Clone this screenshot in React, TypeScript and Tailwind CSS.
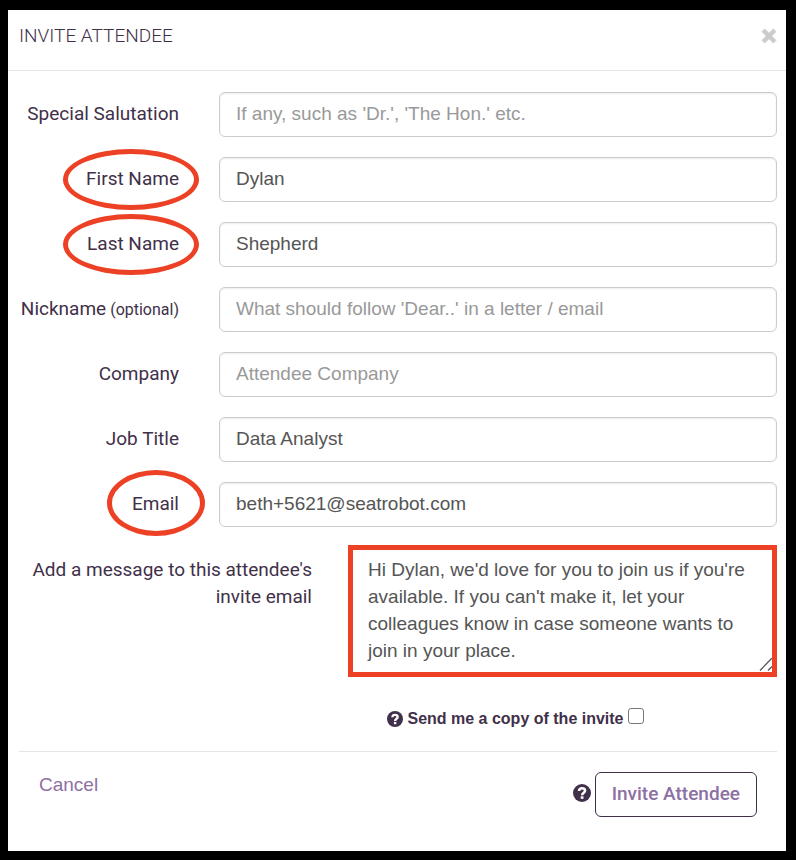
import { useState } from "react";

type Field = {
    id: string;
    label: string;
    hint?: string;
    type?: string;
    placeholder?: string;
    value?: string;
    mark?: "wide" | "narrow";
};

const fields: Field[] = [
    {
        id: "salutation",
        label: "Special Salutation",
        placeholder: "If any, such as 'Dr.', 'The Hon.' etc.",
    },
    { id: "firstName", label: "First Name", value: "Dylan", mark: "wide" },
    { id: "lastName", label: "Last Name", value: "Shepherd", mark: "wide" },
    {
        id: "nickname",
        label: "Nickname",
        hint: "(optional)",
        placeholder: "What should follow 'Dear..' in a letter / email",
    },
    { id: "company", label: "Company", placeholder: "Attendee Company" },
    { id: "jobTitle", label: "Job Title", value: "Data Analyst" },
    {
        id: "email",
        label: "Email",
        type: "email",
        value: "beth+5621@seatrobot.com",
        mark: "narrow",
    },
];

const marks = {
    wide: "absolute -top-2 -right-5 h-[61px] w-[136px] rounded-[50%] border-5 border-[#ec4125] pointer-events-none",
    narrow: "absolute -top-3 -right-[26px] h-[66px] w-[98px] rounded-[50%] border-5 border-[#ec4125] pointer-events-none",
};

const HelpIcon = ({ className }: { className: string }) => (
    <svg viewBox="0 0 16 16" className={className} aria-hidden="true">
        <circle cx="8" cy="8" r="8" fill="currentColor" />
        <path
            d="M5.4 6.3C5.4 4.6 6.4 3.8 8 3.8S10.7 4.7 10.7 6C10.7 7.8 8.1 7.7 8.1 9.9"
            fill="none"
            stroke="white"
            strokeWidth="2.3"
        />
        <path d="M6.9 10.9H9.3V13.2H6.9Z" fill="white" />
    </svg>
);

const FormRow = ({ field }: { field: Field }) => (
    <div className="grid grid-cols-[160px_1fr] gap-10">
        <label
            htmlFor={field.id}
            className="relative h-[45px] text-right leading-[43px] whitespace-nowrap"
        >
            {field.label}
            {field.hint && <span className="text-base"> {field.hint}</span>}
            {field.mark && <span className={marks[field.mark]} />}
        </label>
        <input
            id={field.id}
            name={field.id}
            type={field.type ?? "text"}
            placeholder={field.placeholder}
            defaultValue={field.value}
            className="h-[45px] w-full min-w-0 rounded-md border border-[#ccc] px-4 pb-0.5 font-['Liberation_Sans',sans-serif] text-[#555] shadow-[inset_0_1px_2px_rgba(0,0,0,0.08)] placeholder:text-[#999]"
        />
    </div>
);

export default function App() {
    const [sendCopy, setSendCopy] = useState(false);

    return (
        <div className="flex min-h-screen flex-col bg-black pt-2.5 pr-2.5 pb-[9px] pl-2">
            <div
                role="dialog"
                aria-labelledby="dialog-title"
                className="flex-1 bg-white font-[Roboto,sans-serif] text-[19px] text-[#413049]"
            >
                <div className="flex h-[61px] items-start justify-between border-b border-[#e5e5e5] pt-3 pr-[9px] pl-[11px]">
                    <h1 id="dialog-title" className="leading-7 font-light">
                        INVITE ATTENDEE
                    </h1>
                    <button type="button" aria-label="Close" className="mt-1.5 text-[#ccc]">
                        <svg viewBox="0 0 16 16" className="h-4 w-4">
                            <path
                                d="M3.2 3.2 12.8 12.8M12.8 3.2 3.2 12.8"
                                stroke="currentColor"
                                strokeWidth="3"
                            />
                            <path
                                d="M3.6 1 8 5.3 12.4 1 15 3.6 10.7 8 15 12.4 12.4 15 8 10.7 3.6 15 1 12.4 5.3 8 1 3.6Z"
                                fill="currentColor"
                                stroke="currentColor"
                                strokeWidth="0.8"
                                strokeLinejoin="round"
                            />
                        </svg>
                    </button>
                </div>
                <form className="pt-[21px] pr-[9px] pl-[11px]" onSubmit={(e) => e.preventDefault()}>
                    <div className="flex flex-col gap-5">
                        {fields.map((field) => (
                            <FormRow key={field.id} field={field} />
                        ))}
                    </div>
                    <div className="mt-[18px] grid grid-cols-[293px_1fr] gap-9">
                        <label htmlFor="message" className="pt-[11px] pl-3 text-right leading-[27px]">
                            Add a message to this attendee's invite email
                        </label>
                        <div className="relative">
                            <textarea
                                id="message"
                                name="message"
                                className="block h-[132px] w-full resize-none border-5 border-[#ec4125] px-[15px] py-1.5 font-['Liberation_Sans',sans-serif] leading-[27px] text-[#555]"
                                defaultValue="Hi Dylan, we'd love for you to join us if you're available. If you can't make it, let your colleagues know in case someone wants to join in your place."
                            />
                            <svg
                                viewBox="0 0 14 14"
                                className="pointer-events-none absolute right-[5px] bottom-[5px] h-3.5 w-3.5"
                            >
                                <path
                                    d="M2 12.5 14 0M10 12.5 14 8.5"
                                    fill="none"
                                    stroke="#555"
                                    strokeWidth="1.3"
                                />
                            </svg>
                        </div>
                    </div>
                    <div className="mt-[30px] flex items-center justify-center gap-1 pl-[235px] font-['Liberation_Sans',sans-serif] text-base leading-6 font-bold">
                        <HelpIcon className="h-4 w-4" />
                        <label htmlFor="sendCopy">Send me a copy of the invite</label>
                        <input
                            id="sendCopy"
                            type="checkbox"
                            checked={sendCopy}
                            onChange={(e) => setSendCopy(e.target.checked)}
                            className="mb-1.5 h-4 w-4 appearance-none rounded-[3px] border border-[#767676] checked:bg-[#413049]"
                        />
                    </div>
                    <div className="mt-5 flex items-start justify-between border-t border-[#e5e5e5] px-5 pt-5">
                        <button
                            type="button"
                            className="font-['Liberation_Sans',sans-serif] leading-[25px] text-[#8d70a3]"
                        >
                            Cancel
                        </button>
                        <div className="flex items-center gap-1">
                            <HelpIcon className="mb-1 h-[18px] w-[18px]" />
                            <button
                                type="submit"
                                className="h-[45px] rounded-md border border-[#413049] px-4 font-medium text-[#8d70a3]"
                            >
                                Invite Attendee
                            </button>
                        </div>
                    </div>
                </form>
            </div>
        </div>
    );
}
